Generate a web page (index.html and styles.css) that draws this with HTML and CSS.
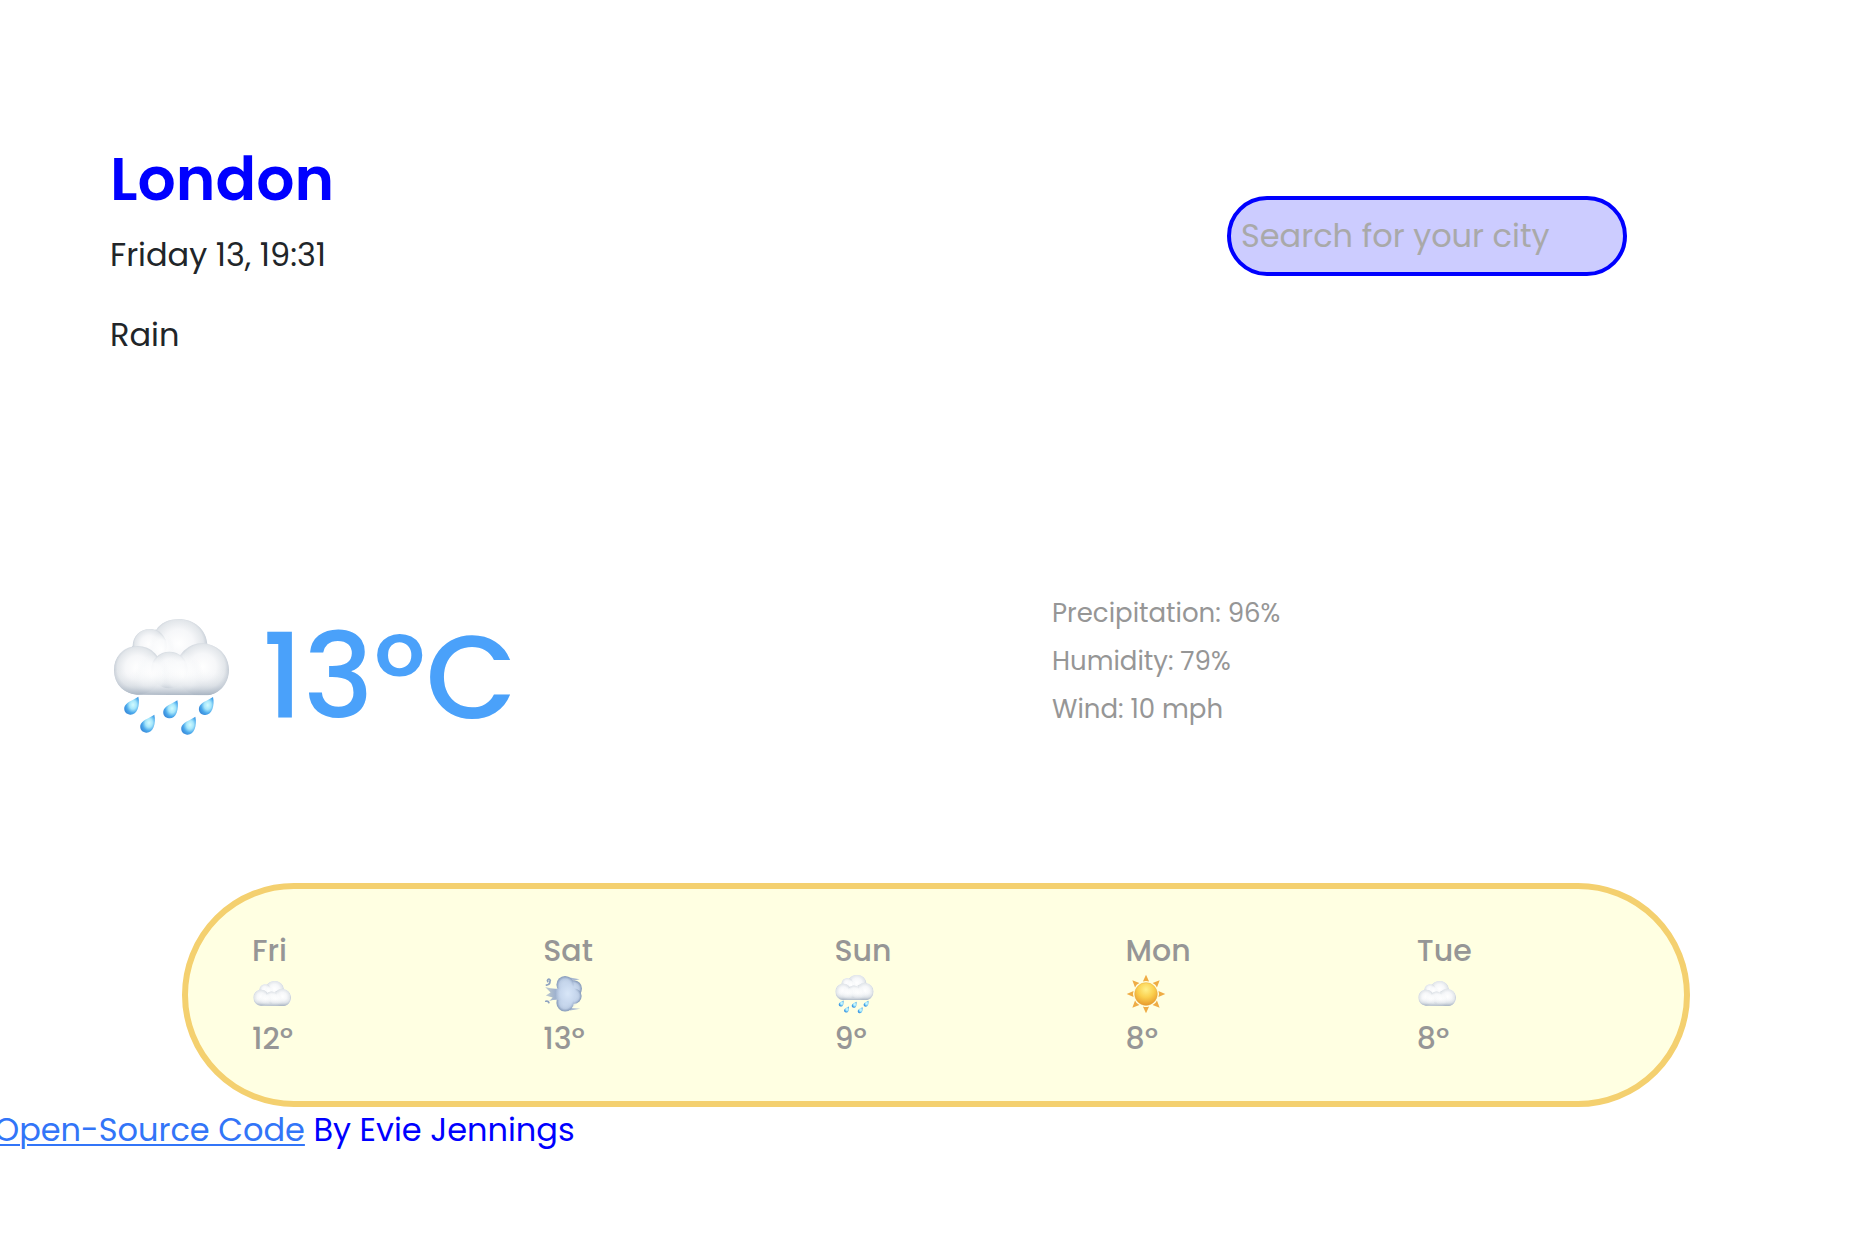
FILE: index.html
```html
<!DOCTYPE html>
<html lang="en">
<head>
<meta charset="utf-8">
<meta name="viewport" content="width=device-width, initial-scale=1">
<title>Weather in London</title>
<link rel="stylesheet" href="styles.css">
</head>
<body>
<svg class="sprite" aria-hidden="true">
  <defs>
    <radialGradient id="puff" cx=".5" cy=".45" r=".56">
      <stop offset="0" stop-color="#fff"/>
      <stop offset=".45" stop-color="#f6f7f9"/>
      <stop offset=".75" stop-color="#e2e6ea"/>
      <stop offset="1" stop-color="#a9b4c2"/>
    </radialGradient>
    <linearGradient id="base" x1="0" y1="0" x2="0" y2="1">
      <stop offset="0" stop-color="#fff" stop-opacity="0"/>
      <stop offset=".6" stop-color="#d5dbe2" stop-opacity=".5"/>
      <stop offset="1" stop-color="#a5b1bf"/>
    </linearGradient>
    <radialGradient id="soft" cx=".5" cy=".5" r=".5">
      <stop offset="0" stop-color="#fff"/>
      <stop offset=".6" stop-color="#fafbfc" stop-opacity=".9"/>
      <stop offset="1" stop-color="#f4f6f8" stop-opacity="0"/>
    </radialGradient>
    <radialGradient id="water" cx=".6" cy=".45" r=".6">
      <stop offset="0" stop-color="#d2fbff"/>
      <stop offset=".4" stop-color="#a5e6fb"/>
      <stop offset=".75" stop-color="#4aa9ec"/>
      <stop offset="1" stop-color="#3d8fdc"/>
    </radialGradient>
    <radialGradient id="sun-face" cx=".5" cy=".3" r=".7">
      <stop offset="0" stop-color="#fff08a"/>
      <stop offset=".5" stop-color="#fbd04f"/>
      <stop offset="1" stop-color="#e89a2c"/>
    </radialGradient>
    <radialGradient id="gust" cx=".5" cy=".5" r=".55">
      <stop offset="0" stop-color="#d5e3f5"/>
      <stop offset=".6" stop-color="#b9cae2"/>
      <stop offset="1" stop-color="#7388aa"/>
    </radialGradient>
    <radialGradient id="gust-core" cx=".5" cy=".5" r=".5">
      <stop offset="0" stop-color="#d8e6f8"/>
      <stop offset=".6" stop-color="#c8d8ee"/>
      <stop offset="1" stop-color="#c0d1e8" stop-opacity="0"/>
    </radialGradient>
    <linearGradient id="gust-tail" x1="0" y1="0" x2="1" y2="0">
      <stop offset="0" stop-color="#8ea2c1" stop-opacity=".5"/>
      <stop offset=".5" stop-color="#9fb2ce"/>
      <stop offset="1" stop-color="#c8d8ee"/>
    </linearGradient>
    <clipPath id="cloud-clip"><path d="M98 136C98 105 121 84 148 84Q160 83 169 86C181 66 207 54 236 54C282 54 318 84 322 129C360 136 387 168 387 206C387 249 358 281 317 283L110 281C69 277 42 247 42 207C42 169 66 140 98 136Z"/></clipPath>
    <g id="cloud" clip-path="url(#cloud-clip)">
      <path d="M40 50H390V290H40Z" fill="#f5f6f8"/>
      <ellipse cx="236" cy="136" rx="88" ry="84" fill="url(#puff)"/>
      <circle cx="148" cy="135" r="52" fill="url(#puff)"/>
      <ellipse cx="184" cy="146" rx="40" ry="50" fill="url(#soft)"/>
      <circle cx="113" cy="208" r="73" fill="url(#puff)"/>
      <circle cx="308" cy="206" r="80" fill="url(#puff)"/>
      <circle cx="208" cy="207" r="55" fill="url(#puff)"/>
      <ellipse cx="157" cy="226" rx="56" ry="66" fill="url(#soft)"/>
      <ellipse cx="247" cy="226" rx="64" ry="74" fill="url(#soft)"/>
      <path d="M40 205H390V285H40Z" fill="url(#base)"/>
    </g>
    <path id="drop" d="M44 1C47 13 46 27 42 38C37 50 29 56 19 55C7 54 0 45 2 33C5 18 28 12 44 1Z" fill="url(#water)"/>
    <symbol id="icon-cloud" viewBox="30 -9 366 366"><use href="#cloud"/></symbol>
    <symbol id="icon-rain" viewBox="30 48 360 360">
      <use href="#cloud"/>
      <use href="#drop" x="71" y="286"/>
      <use href="#drop" x="188" y="297"/>
      <use href="#drop" x="295" y="287"/>
      <use href="#drop" x="119" y="340"/>
      <use href="#drop" x="242" y="346"/>
    </symbol>
    <symbol id="icon-sun" viewBox="-58 -58 116 116">
      <g fill="#efac45">
        <path id="ray" d="M0-56L9-36Q0-40-9-36Z"/>
        <use href="#ray" transform="rotate(45)"/>
        <use href="#ray" transform="rotate(90)"/>
        <use href="#ray" transform="rotate(135)"/>
        <use href="#ray" transform="rotate(180)"/>
        <use href="#ray" transform="rotate(225)"/>
        <use href="#ray" transform="rotate(270)"/>
        <use href="#ray" transform="rotate(315)"/>
      </g>
      <circle r="33" fill="url(#sun-face)" stroke="#e5a23a" stroke-width="1"/>
    </symbol>
    <symbol id="icon-wind" viewBox="0 0 116 116">
      <path d="M70 9L106 15L80 22ZM70 98L108 101L78 106Z" fill="#a9b9d0"/>
      <circle cx="90" cy="42" r="23" fill="url(#gust)"/>
      <circle cx="90" cy="64" r="22" fill="url(#gust)"/>
      <circle cx="64" cy="84" r="25" fill="url(#gust)"/>
      <circle cx="64" cy="31" r="25" fill="url(#gust)"/>
      <path d="M6 38Q28 45 48 42H66V76H52Q36 72 18 78L28 68L8 62L22 54Z" fill="url(#gust-tail)"/>
      <ellipse cx="72" cy="57" rx="36" ry="46" fill="url(#gust-core)"/>
      <path d="M10 32Q21 30 20 22A4 4 0 1 0 14 22M8 79Q15 77 17 83" fill="none" stroke="#8fa3c0" stroke-width="5" stroke-linecap="round"/>
    </symbol>
  </defs>
</svg>

<main>
  <header class="top">
    <div>
      <h1 class="city">London</h1>
      <p class="detail">Friday 13, 19:31</p>
      <p class="detail">Rain</p>
    </div>
    <form class="search">
      <input class="search-input" type="search" placeholder="Search for your city" aria-label="Search for your city">
    </form>
  </header>

  <section class="now" aria-label="Current weather">
    <div class="current">
      <svg class="current-icon" role="img" aria-label="Rain"><use href="#icon-rain"/></svg>
      <span class="temperature">13ºC</span>
    </div>
    <ul class="stats">
      <li>Precipitation: 96%</li>
      <li>Humidity: 79%</li>
      <li>Wind: 10 mph</li>
    </ul>
  </section>

  <section class="forecast" aria-label="Five day forecast">
    <div class="day"><span>Fri</span><svg class="day-icon" role="img" aria-label="Cloudy"><use href="#icon-cloud"/></svg><span>12º</span></div>
    <div class="day"><span>Sat</span><svg class="day-icon" role="img" aria-label="Windy"><use href="#icon-wind"/></svg><span>13º</span></div>
    <div class="day"><span>Sun</span><svg class="day-icon" role="img" aria-label="Rain"><use href="#icon-rain"/></svg><span>9º</span></div>
    <div class="day"><span>Mon</span><svg class="day-icon" role="img" aria-label="Sunny"><use href="#icon-sun"/></svg><span>8º</span></div>
    <div class="day"><span>Tue</span><svg class="day-icon" role="img" aria-label="Cloudy"><use href="#icon-cloud"/></svg><span>8º</span></div>
  </section>
</main>

<footer class="credit"><a class="credit-link" href="#">Open-Source Code</a> By Evie Jennings</footer>
</body>
</html>
```
FILE: styles.css
```css
* { box-sizing: border-box; }

body {
  margin: 0;
  overflow-x: hidden;
  background: #fff;
  color: #212529;
  font-family: Poppins, Inter, sans-serif;
  font-size: 32px;
}

.sprite {
  display: block;
  width: 0;
  height: 0;
}

.top {
  display: flex;
  justify-content: space-between;
  align-items: flex-start;
  padding: 143px 235px 0 110px;
}

.city {
  margin: 0;
  color: #00f;
  font-size: 60px;
  font-weight: 600;
  line-height: 72px;
}

.detail {
  margin: 0;
  line-height: 80px;
}

.search { padding-top: 53px; }

.search-input {
  appearance: none;
  display: block;
  width: 400px;
  height: 80px;
  padding: 0 10px;
  border: 4px solid #00f;
  border-radius: 40px;
  background: #ccf;
  font-family: inherit;
  font-size: 32px;
}

.search-input::placeholder {
  color: #a9a9a9;
  opacity: 1;
}

.now {
  display: grid;
  grid-template-columns: 1fr 1fr;
  align-items: start;
  margin-top: 214px;
  padding: 0 110px;
}

.current {
  display: flex;
  align-items: center;
  gap: 32px;
  height: 175px;
}

.current-icon {
  width: 120px;
  height: 120px;
}

.temperature {
  color: #4aa1fa;
  font-size: 118px;
  font-weight: 500;
  line-height: 176px;
}

.stats {
  margin: 0;
  padding: 0 0 0 121px;
  list-style: none;
  color: #969696;
  font-size: 26px;
  line-height: 48px;
}

.forecast {
  display: grid;
  grid-template-columns: repeat(5, 1fr);
  column-gap: 24px;
  margin: 119px 172px 0 182px;
  padding: 40px 0 40px 64px;
  border: 6px solid #f4d06f;
  border-radius: 112px;
  background: #ffffe2;
  color: #969696;
}

.day {
  display: flex;
  flex-direction: column;
  font-size: 30px;
  font-weight: 500;
  line-height: 44px;
}

.day-icon {
  width: 40px;
  height: 40px;
  margin: 1px 0 3px;
}

.credit {
  margin-left: -6px;
  color: #00f;
  line-height: 46px;
}

.credit-link {
  color: #3275f8;
  text-decoration: underline;
  text-decoration-thickness: 2px;
  text-underline-offset: 3px;
}
```
